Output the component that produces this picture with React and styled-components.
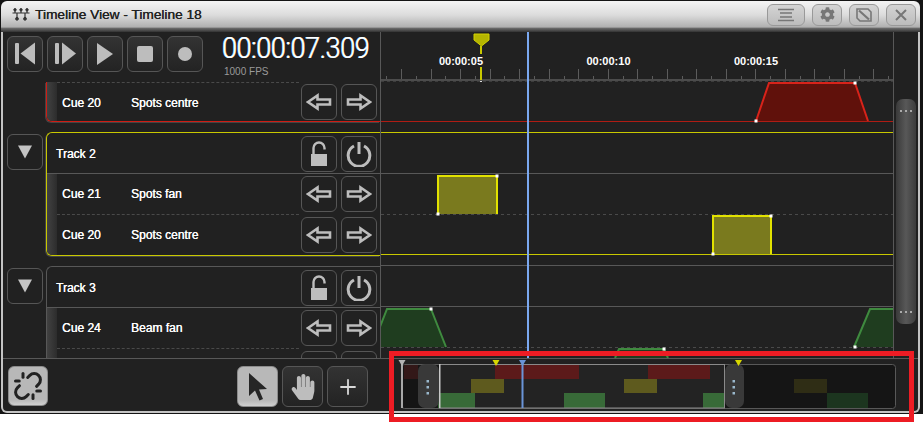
import React from 'react';
import styled, { createGlobalStyle } from 'styled-components';
import { FaCog, FaHandPaper } from 'react-icons/fa';
import { Unlink, Plus } from 'lucide-react';

const UI_FONT = '"Liberation Sans", Arial, sans-serif';

const GlobalStyle = createGlobalStyle`
    html, body {
        margin: 0;
        background: #fff;
        font-family: ${UI_FONT};
    }
`;

const Page = styled.div`
    position: relative;
    width: 923px;
    height: 438px;
    background: #fff;
`;

const Shell = styled.div`
    height: 414px;
    box-sizing: border-box;
    padding: 1px 3px 0 1px;
    background: #141414;
`;

const Highlight = styled.div`
    position: absolute;
    left: 389px;
    top: 351px;
    width: 525px;
    height: 71px;
    box-sizing: border-box;
    border: 5px solid #ed1c24;
    pointer-events: none;
`;

const Window = styled.div`
    display: flex;
    flex-direction: column;
    height: 412px;
`;

const TitleBar = styled.div`
    display: flex;
    align-items: center;
    flex: none;
    height: 31px;
    box-sizing: border-box;
    padding: 0 4px 4px 11px;
    border-radius: 6px 6px 0 0;
    background: linear-gradient(#f4f4f4 0%, #dcdcdc 45%, #b0b0b0 84%, #6a6a6a 88%, #333 100%);
`;

const TitleText = styled.div`
    flex: 1;
    margin-left: 5px;
    font-size: 13.7px;
    color: #222;
    text-shadow: 0.3px 0 0 #222;
`;

const TitleButtons = styled.div`
    display: flex;
    gap: 7px;
`;

const TitleButton = styled.div`
    display: flex;
    align-items: center;
    justify-content: center;
    width: ${(p) => p.$width || 30}px;
    height: 22px;
    box-sizing: border-box;
    border: 1px solid #999;
    border-radius: 6px;
    color: #777;
    background: linear-gradient(#d4d4d4, #bcbcbc);
`;

const Body = styled.div`
    display: flex;
    flex-direction: column;
    flex: 1;
    min-height: 0;
    border: 2px solid #c4c4c4;
    border-top: none;
    border-radius: 0 0 6px 6px;
    background: #212121;
    color: #fff;
`;

const Main = styled.div`
    display: flex;
    height: 326px;
    flex: none;
`;

const LeftPanel = styled.div`
    display: flex;
    flex-direction: column;
    width: 377px;
    flex: none;
`;

const Transport = styled.div`
    display: flex;
    height: 50px;
    flex: none;
    box-sizing: border-box;
    padding: 4px 0 0 4px;
    gap: 4px;
`;

const IconButton = styled.div`
    display: flex;
    align-items: center;
    justify-content: center;
    flex: none;
    width: ${(p) => p.$size || 36}px;
    height: ${(p) => p.$size || 36}px;
    box-sizing: border-box;
    border: 1px solid ${(p) => (p.$active ? '#8c8c8c' : '#565656')};
    border-radius: 6px;
    color: ${(p) => (p.$active ? '#222' : p.$bright ? '#d8d8d8' : '#bdbdbd')};
    background: ${(p) =>
        p.$active
            ? 'linear-gradient(#b8b8b8 85%, #d0d0d0)'
            : p.$raised
              ? 'linear-gradient(#333, #232323)'
              : 'transparent'};
`;

const Clock = styled.div`
    margin-left: 15px;
    display: flex;
    flex-direction: column;
`;

const ClockDigits = styled.div`
    height: 24px;
    width: 152px;
    font-family: Roboto, "Liberation Sans", sans-serif;
    font-size: 30px;
    font-weight: 300;
    line-height: 24px;
    letter-spacing: -0.5px;
    white-space: nowrap;
    color: #fff;
    font-variant-numeric: tabular-nums;
    text-shadow: -0.5px 0 #7cc8ff, 0.5px 0 #ffc890;
    transform: scaleX(0.9);
    transform-origin: left center;
`;

const ClockRate = styled.div`
    margin: 6px 0 0 2px;
    font-size: 10px;
    line-height: 12px;
    color: #9a9a9a;
`;

const TrackList = styled.div`
    flex: 1;
    min-height: 0;
    overflow: hidden;
    display: flex;
    flex-direction: column;
    gap: 10px;
    padding-left: 4px;
`;

const TrackRow = styled.div`
    display: flex;
    flex: none;
    gap: 3px;
`;

const Collapse = styled.div`
    width: 36px;
    flex: none;
    padding-top: 2px;
`;

const TrackBox = styled.div`
    flex: 1;
    min-width: 0;
    border: 1px solid ${(p) => p.$accent || '#585858'};
    border-right: none;
    border-top: ${(p) => (p.$cut ? 'none' : undefined)};
    border-radius: ${(p) => (p.$cut ? '0 0 0 6px' : '6px 0 0 6px')};
    box-shadow: ${(p) => (p.$accent ? '-1px 1px 0 #444' : 'none')};
    overflow: hidden;
`;

const TrackHeader = styled.div`
    display: flex;
    height: 41px;
    box-sizing: border-box;
    padding: 3px 3px 0 9px;
    border-bottom: 1px solid #585858;
`;

const TrackName = styled.div`
    flex: 1;
    font-size: 12px;
    line-height: 37px;
    text-shadow: 0.3px 0 0 #fff;
`;

const CueRow = styled.div`
    display: flex;
    height: ${(p) => p.$height || 41}px;
    box-sizing: border-box;
`;

const CueStrip = styled.div`
    width: 10px;
    flex: none;
    background: linear-gradient(90deg, #424242, #2c2c2c);
`;

const CueInfo = styled.div`
    display: flex;
    flex: 1;
    min-width: 0;
    box-sizing: border-box;
    padding-left: 5px;
    font-size: 12px;
    line-height: 40px;
    text-shadow: 0.3px 0 0 #fff;
    border-top: ${(p) => (p.$dashedTop ? '1px dashed #4a4a4a' : 'none')};
    border-bottom: 1px dashed ${(p) => (p.$dashed ? '#4a4a4a' : 'transparent')};
`;

const CueLabel = styled.span`
    width: 69px;
    flex: none;
`;

const CueButtons = styled.div`
    display: flex;
    gap: 4px;
    padding: 2px 3px 0 2px;
`;

const TimelinePane = styled.svg`
    display: block;
    width: 512px;
    height: 326px;
    flex: none;
    border-left: 1px solid #585858;
`;

const ScrollColumn = styled.div`
    flex: 1;
    box-sizing: border-box;
    padding: 67px 2px 0 2px;
    border-left: 1px solid #585858;
`;

const ScrollThumb = styled.div`
    display: flex;
    flex-direction: column;
    justify-content: space-between;
    align-items: center;
    height: 225px;
    box-sizing: border-box;
    padding: 11px 0;
    border-radius: 7px;
    background: linear-gradient(90deg, #3a3a3a, #585858 50%, #3c3c3c);
`;

const GripDots = styled.div`
    width: 13px;
    height: 2px;
    background: repeating-linear-gradient(90deg, #aaa 0 2px, transparent 2px 5px);
`;

const BottomBar = styled.div`
    display: flex;
    flex: 1;
    min-height: 0;
    border-top: 1px solid #585858;
`;

const BottomTools = styled.div`
    display: flex;
    width: 377px;
    flex: none;
    box-sizing: border-box;
    padding: 7px 12px 0 5px;
`;

const ToolGroup = styled.div`
    display: flex;
    gap: 4px;
    margin-left: auto;
`;

const MiniMap = styled.svg`
    display: block;
    flex: 1;
    height: 51px;
`;

const ButtonGap = styled.div`
    width: 4px;
    flex: none;
`;

function ArrowIcon({ flip }) {
    return (
        <svg width="26" height="18" viewBox="0 0 26 18" style={flip ? { transform: 'scaleX(-1)' } : undefined}>
            <path d="M2 9 L11.5 2.5 V6.5 H24 V11.5 H11.5 V15.5 Z" fill="none" stroke="#bdbdbd" strokeWidth="2.6" strokeLinejoin="miter" />
        </svg>
    );
}

function LockIcon() {
    return (
        <svg width="18" height="26" viewBox="0 0 18 26">
            <path d="M3.5 13 V7 A5.5 5.5 0 0 1 14.5 7 V8.5" fill="none" stroke="#bdbdbd" strokeWidth="2.4" />
            <rect x="1" y="13" width="16" height="12" fill="#bdbdbd" />
        </svg>
    );
}

function PowerIcon() {
    return (
        <svg width="26" height="26" viewBox="0 0 26 26">
            <path d="M8 5 A10.8 10.8 0 1 0 18 5" fill="none" stroke="#bdbdbd" strokeWidth="3" />
            <rect x="11.5" y="1" width="3" height="12" fill="#bdbdbd" />
        </svg>
    );
}

function Triangle() {
    return (
        <svg width="16" height="14" viewBox="0 0 16 14">
            <path d="M1 0.5 H15 L8 13.5 Z" fill="#c4c4c4" />
        </svg>
    );
}

function TransportIcon({ kind }) {
    return (
        <svg width="34" height="34" viewBox="0 0 34 34" fill="#bdbdbd">
            {kind === 'start' && (
                <>
                    <rect x="7" y="6" width="4" height="21" rx="1" />
                    <path d="M27 5.5 V27.5 L12.5 16.5 Z" />
                </>
            )}
            {kind === 'step' && (
                <>
                    <rect x="7" y="6" width="4" height="21" rx="1" />
                    <path d="M14 5.5 V27.5 L28 16.5 Z" />
                </>
            )}
            {kind === 'play' && <path d="M9 6 V28 L25 17 Z" />}
            {kind === 'stop' && <rect x="9" y="9" width="16" height="16" rx="2" />}
            {kind === 'record' && <circle cx="17" cy="17" r="7" />}
        </svg>
    );
}

function PointerIcon() {
    return (
        <svg width="22" height="30" viewBox="0 0 22 30">
            <path d="M2 1 V24 L8 18.5 L12.5 28.5 L16 27 L12 17.5 L20 17 Z" fill="#262626" />
        </svg>
    );
}

function RigIcon() {
    return (
        <svg width="18" height="13" viewBox="0 0 18 13" fill="#333" stroke="#333">
            <path d="M0.5 5 H17.5 M3 1.5 V5 M9 1.5 V5 M15 1.5 V5 M5 5 V10.5 M13 5 V10.5" fill="none" strokeWidth="1.2" />
            <circle cx="3" cy="1.8" r="1.2" />
            <circle cx="9" cy="1.8" r="1.2" />
            <circle cx="15" cy="1.8" r="1.2" />
            <circle cx="5" cy="10.8" r="1.4" />
            <circle cx="13" cy="10.8" r="1.4" />
        </svg>
    );
}

function MenuIcon() {
    return (
        <svg width="20" height="14" viewBox="0 0 20 14" stroke="#777" strokeWidth="1.6">
            <path d="M2 1.5 H18 M4 5 H16 M4 9 H16 M2 12.5 H18" />
        </svg>
    );
}

function ResizeIcon() {
    return (
        <svg width="20" height="18" viewBox="0 0 20 18" fill="none" stroke="#777" strokeWidth="1.6">
            <path d="M3 3 H14 L17 6 V15 H6 L3 12 Z" />
            <path d="M5 4.5 L15 13.5" strokeWidth="2.2" />
        </svg>
    );
}

function CloseIcon() {
    return (
        <svg width="14" height="14" viewBox="0 0 14 14" stroke="#777" strokeWidth="2">
            <path d="M2 2 L12 12 M12 2 L2 12" />
        </svg>
    );
}

const TICKS = Array.from({ length: 35 }, (_, i) => i);

const CUE_BUTTONS = (
    <CueButtons>
        <IconButton><ArrowIcon /></IconButton>
        <IconButton><ArrowIcon flip /></IconButton>
    </CueButtons>
);

const TRACK_BUTTONS = (
    <>
        <IconButton><LockIcon /></IconButton>
        <ButtonGap />
        <IconButton><PowerIcon /></IconButton>
    </>
);

function Cue({ number, name, dashed, dashedTop, height }) {
    return (
        <CueRow $height={height}>
            <CueStrip />
            <CueInfo $dashed={dashed} $dashedTop={dashedTop}>
                <CueLabel>{number}</CueLabel>
                {name}
            </CueInfo>
            {CUE_BUTTONS}
        </CueRow>
    );
}

function Dot({ x, y }) {
    return <rect x={x - 1.5} y={y - 1.5} width="3" height="3" fill="#fff" />;
}

function Timeline() {
    return (
        <TimelinePane viewBox="381 32 512 326">
            {/* ruler */}
            {TICKS.map((i) => {
                const x = Math.round(386.4 + i * 14.76) + 0.5;
                return <line key={i} x1={x} x2={x} y1={i % 2 ? 69 : 76} y2="80" stroke="#5c5c5c" />;
            })}
            <rect x="381" y="79" width="512" height="2" fill="#4c4c4c" />
            <line x1="381" x2="893" y1="81.5" y2="81.5" stroke="#3c3c3c" strokeDasharray="3 3" />
            {[['00:00:05', 461], ['00:00:10', 608.5], ['00:00:15', 756]].map(([label, x]) => (
                <text key={label} x={x} y="65" textAnchor="middle" fontFamily={UI_FONT} fontSize="11" fontWeight="700" fill="#fff">
                    {label}
                </text>
            ))}

            {/* lanes */}
            <rect x="381" y="121" width="512" height="1" fill="#b01c14" />
            <rect x="381" y="132" width="512" height="1" fill="#c8c800" />
            <rect x="381" y="173" width="512" height="1" fill="#585858" />
            <line x1="381" x2="893" y1="214.5" y2="214.5" stroke="#4a4a4a" strokeDasharray="3 3" />
            <rect x="381" y="254" width="512" height="1" fill="#c8c800" />
            <rect x="381" y="265" width="512" height="1" fill="#585858" />
            <rect x="381" y="306" width="512" height="1" fill="#585858" />
            <line x1="381" x2="893" y1="347.5" y2="347.5" stroke="#4a4a4a" strokeDasharray="3 3" />

            {/* red cue */}
            <path d="M756 121 L769 83 H855 L868 121 Z" fill="#60110b" />
            <path d="M756 121 L769 83 H855 L868 121" fill="none" stroke="#d8231a" strokeWidth="2" />
            <Dot x={756} y={121} />
            <Dot x={855} y={83} />

            {/* yellow cues */}
            <rect x="438" y="176" width="59" height="38" fill="#7a7a1e" />
            <path d="M438 214 V176 H497 V214" fill="none" stroke="#e2e200" strokeWidth="2" />
            <Dot x={497} y={176} />
            <Dot x={438} y={214} />
            <rect x="713" y="216" width="58" height="38" fill="#7a7a1e" />
            <path d="M713 254 V216 H771 V254" fill="none" stroke="#e2e200" strokeWidth="2" />
            <Dot x={771} y={216} />
            <Dot x={713} y={254} />

            {/* green cues */}
            <path d="M372 347 L387 309 H431 L446 347 Z" fill="#1f3d1f" />
            <path d="M372 347 L387 309 H431 L446 347" fill="none" stroke="#3f8a3f" strokeWidth="2" />
            <Dot x={431} y={309} />
            <path d="M854 347 L870 309 H900 V347 Z" fill="#1f3d1f" />
            <path d="M854 347 L870 309 H900" fill="none" stroke="#3f8a3f" strokeWidth="2" />
            <Dot x={855} y={347} />
            <path d="M615 358 L619 349 H664 L668 358 Z" fill="#1f3d1f" />
            <path d="M615 358 L619 349 H664 L668 358" fill="none" stroke="#3f8a3f" strokeWidth="2" />
            <Dot x={664} y={349} />

            {/* playhead and marker */}
            <path d="M474 34 H489 V40 L481.5 46 L474 40 Z" fill="#b4b400" stroke="#d2d200" />
            <rect x="480" y="46" width="2" height="8" fill="#c8c800" />
            <rect x="480" y="67" width="2" height="13" fill="#c8c800" />
            <rect x="480" y="81" width="2" height="1" fill="#ddd" />
            <rect x="527" y="32" width="2" height="326" fill="#7aa8f0" />
        </TimelinePane>
    );
}

function Bar({ x, x2, row, fill }) {
    return <rect x={x} y={365 + row * 14} width={x2 - x} height={row === 2 ? 15 : 14} fill={fill} />;
}

function Handle({ x, x2, dotX }) {
    return (
        <>
            <rect x={x} y="364" width={x2 - x} height="44" rx="7" fill="#3d3d3d" opacity="0.92" />
            {[381, 387, 393].map((y) => (
                <rect key={y} x={dotX - 1} y={y - 1} width="2.5" height="2.5" fill="#9ab8cc" />
            ))}
        </>
    );
}

function Marker({ x, fill }) {
    return <path d={`M${x - 3.5} 360 H${x + 3.5} L${x} 366 Z`} fill={fill} />;
}

function Overview() {
    return (
        <MiniMap viewBox="380 359 538 51">
            <rect x="401.5" y="364.5" width="494" height="44" rx="3" fill="#151515" stroke="#585858" />
            <rect x="439" y="365" width="285" height="43" fill="#232323" />

            <Bar x={404} x2={418} row={0} fill="#331818" />
            <Bar x={495} x2={579} row={0} fill="#5c1a1a" />
            <Bar x={648} x2={710} row={0} fill="#5c1a1a" />
            <Bar x={471} x2={504} row={1} fill="#5e5a1e" />
            <Bar x={624} x2={657} row={1} fill="#5e5a1e" />
            <Bar x={794} x2={827} row={1} fill="#2f2d15" />
            <Bar x={438} x2={475} row={2} fill="#386a38" />
            <Bar x={564} x2={605} row={2} fill="#386a38" />
            <Bar x={703} x2={724} row={2} fill="#386a38" />
            <Bar x={827} x2={868} row={2} fill="#1c351f" />

            <rect x="439.5" y="364.5" width="285" height="43.5" fill="none" stroke="#8a8a8a" />
            <rect x="439" y="364" width="1.5" height="44" fill="#c8c8c8" />

            <Handle x={418} x2={439} dotX={427.5} />
            <Handle x={725} x2={744} dotX={733.5} />

            <rect x="401" y="364" width="2" height="44" fill="#a8a8a8" />
            <rect x="521.5" y="364" width="2" height="44" fill="#6a94d8" />
            <Marker x={402} fill="#b4b4b4" />
            <Marker x={496} fill="#d8d800" />
            <Marker x={522.5} fill="#6a94d8" />
            <Marker x={738.5} fill="#d8d800" />
        </MiniMap>
    );
}

export default function App() {
    return (
        <Page>
            <GlobalStyle />
            <Shell>
                <Window>
                    <TitleBar>
                        <RigIcon />
                        <TitleText>Timeline View - Timeline 18</TitleText>
                        <TitleButtons>
                            <TitleButton $width={38}><MenuIcon /></TitleButton>
                            <TitleButton><FaCog size={15} /></TitleButton>
                            <TitleButton><ResizeIcon /></TitleButton>
                            <TitleButton><CloseIcon /></TitleButton>
                        </TitleButtons>
                    </TitleBar>
                    <Body>
                        <Main>
                            <LeftPanel>
                                <Transport>
                                    {['start', 'step', 'play', 'stop', 'record'].map((kind) => (
                                        <IconButton key={kind} $raised>
                                            <TransportIcon kind={kind} />
                                        </IconButton>
                                    ))}
                                    <Clock>
                                        <ClockDigits>00:00:07.309</ClockDigits>
                                        <ClockRate>1000 FPS</ClockRate>
                                    </Clock>
                                </Transport>
                                <TrackList>
                                    <TrackRow>
                                        <Collapse />
                                        <TrackBox $accent="#d01c14" $cut>
                                            <Cue number="Cue 20" name="Spots centre" height={39} dashedTop />
                                        </TrackBox>
                                    </TrackRow>
                                    <TrackRow>
                                        <Collapse>
                                            <IconButton><Triangle /></IconButton>
                                        </Collapse>
                                        <TrackBox $accent="#c8c800">
                                            <TrackHeader>
                                                <TrackName>Track 2</TrackName>
                                                {TRACK_BUTTONS}
                                            </TrackHeader>
                                            <Cue number="Cue 21" name="Spots fan" dashed />
                                            <Cue number="Cue 20" name="Spots centre" height={40} />
                                        </TrackBox>
                                    </TrackRow>
                                    <TrackRow>
                                        <Collapse>
                                            <IconButton><Triangle /></IconButton>
                                        </Collapse>
                                        <TrackBox>
                                            <TrackHeader>
                                                <TrackName>Track 3</TrackName>
                                                {TRACK_BUTTONS}
                                            </TrackHeader>
                                            <Cue number="Cue 24" name="Beam fan" dashed />
                                            <Cue number="" name="" />
                                        </TrackBox>
                                    </TrackRow>
                                </TrackList>
                            </LeftPanel>
                            <Timeline />
                            <ScrollColumn>
                                <ScrollThumb>
                                    <GripDots />
                                    <GripDots />
                                </ScrollThumb>
                            </ScrollColumn>
                        </Main>
                        <BottomBar>
                            <BottomTools>
                                <IconButton $size={40} $active><Unlink size={30} strokeWidth={2.4} /></IconButton>
                                <ToolGroup>
                                    <IconButton $size={41} $active><PointerIcon /></IconButton>
                                    <IconButton $size={41} $raised><FaHandPaper size={26} /></IconButton>
                                    <IconButton $size={41} $raised $bright><Plus size={24} strokeWidth={1.8} /></IconButton>
                                </ToolGroup>
                            </BottomTools>
                            <Overview />
                        </BottomBar>
                    </Body>
                </Window>
            </Shell>
            <Highlight />
        </Page>
    );
}
